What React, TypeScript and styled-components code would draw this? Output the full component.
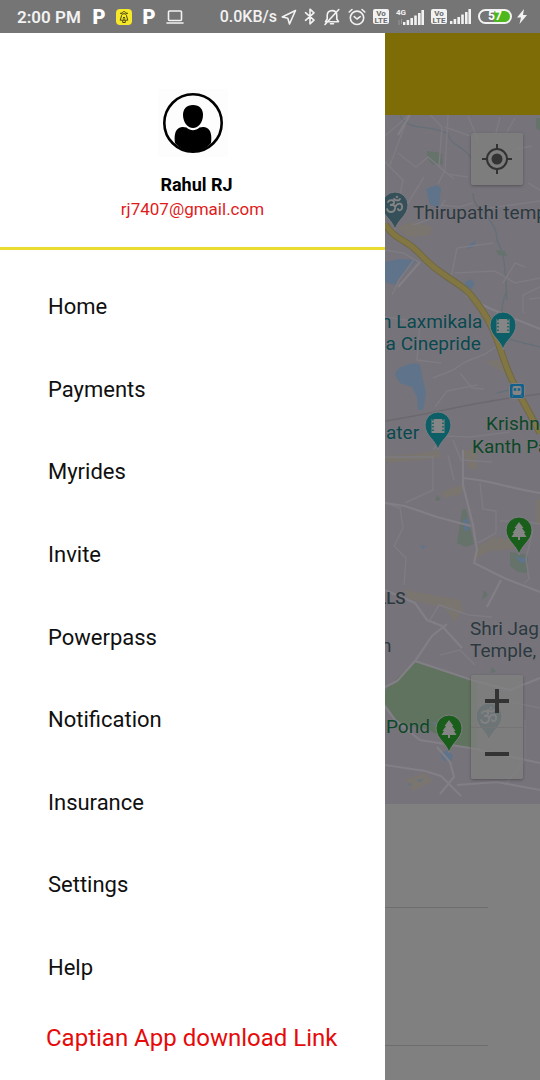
import React from "react";
import styled, { createGlobalStyle } from "styled-components";

const GlobalStyle = createGlobalStyle`
  *, *::before, *::after { box-sizing: border-box; }
  body { margin: 0; background: #808080; font-family: Roboto, "Liberation Sans", sans-serif; }
  button { font: inherit; cursor: pointer; }
`;

const Page = styled.div`
  display: flex;
  flex-direction: column;
  min-height: 100vh;
`;

/* Status bar */
const StatusBar = styled.header`
  display: flex;
  align-items: center;
  justify-content: space-between;
  height: 33px;
  padding: 0 13px 0 17px;
  background: #757575;
  color: #f2f2f2;
  font-size: 17px;
  font-weight: 500;
  white-space: nowrap;
`;

const StatusGroup = styled.div<{ $gap: number }>`
  display: flex;
  align-items: center;
  gap: ${(p) => p.$gap}px;
  svg { display: block; flex: none; }
`;

const Clock = styled.span`
  width: 65px;
  font-weight: 600;
`;

const Speed = styled.span`
  font-size: 16px;
`;

const PLogo = styled.span`
  width: 14px;
  text-align: center;
  font-size: 20px;
  font-weight: 900;
  color: #fff;
`;

const Volte = styled.span`
  display: flex;
  flex-direction: column;
  align-items: center;
  justify-content: center;
  width: 16px;
  height: 15px;
  border-radius: 2px;
  background: #f2f2f2;
  color: #6a6a6a;
  font-size: 8px;
  line-height: 7px;
  font-weight: 700;
`;

const Network = styled.span`
  display: flex;
  align-items: flex-end;
  height: 16px;
`;

const NetworkType = styled.span`
  align-self: flex-start;
  width: 10px;
  margin-right: -8px;
  font-size: 8px;
  line-height: 7px;
  font-weight: 700;
`;

const Battery = styled.span`
  display: flex;
  align-items: center;
  justify-content: center;
  width: 34px;
  height: 15px;
  border: 2px solid #f2f2f2;
  border-radius: 8px;
  background: linear-gradient(to right, #757575 46%, #4db81e 46%);
  color: #fff;
  font-size: 12px;
  line-height: 11px;
  font-weight: 700;
`;

/* Drawer */
const Body = styled.div`
  flex: 1;
  display: grid;
  grid-template-columns: minmax(0, 385px) minmax(0, 1fr);
`;

const Drawer = styled.aside`
  display: flex;
  flex-direction: column;
  background: #fff;
`;

const Profile = styled.section`
  display: flex;
  flex-direction: column;
  align-items: center;
  height: 217px;
  padding-top: 56px;
  border-bottom: 3px solid #e9dc2f;
`;

const AvatarBox = styled.div`
  padding: 4px 5px;
  background: #fdfdfd;
  svg { display: block; }
`;

const UserName = styled.h1`
  margin: 16px 0 0 8px;
  font-size: 18px;
  line-height: 24px;
  font-weight: 700;
  color: #000;
`;

const Email = styled.a`
  font-size: 17px;
  line-height: 24px;
  color: #e01b1b;
  text-decoration: none;
`;

const Menu = styled.nav`
  flex: 1;
  display: flex;
  flex-direction: column;
  padding: 45px 46px 25px;
`;

const MenuList = styled.div`
  flex: 1;
  display: flex;
  flex-direction: column;
  justify-content: space-between;
  padding-left: 2px;
`;

const MenuLink = styled.a`
  font-size: 22px;
  line-height: 24px;
  color: #101010;
  text-decoration: none;
`;

const DownloadLink = styled(MenuLink)`
  margin-top: 41px;
  font-size: 24px;
  line-height: 34px;
  color: #e60a0a;
  white-space: nowrap;
`;

/* Dimmed home screen */
const Home = styled.main`
  display: flex;
  flex-direction: column;
  background: #808080;
`;

const AppBar = styled.div`
  height: 82px;
  background: #7e6c07;
`;

const MapArea = styled.section`
  position: relative;
  flex: 1;
  overflow: hidden;
  background: #77737a;
`;

const MapArt = styled.svg`
  display: block;
  position: absolute;
  inset: 0;
  width: 100%;
  height: 100%;
`;

const Place = styled.span<{ $x: number; $y: number; $tone: string; $strong?: boolean }>`
  position: absolute;
  left: ${(p) => p.$x}px;
  top: ${(p) => p.$y}px;
  color: ${(p) => p.$tone};
  font-size: ${(p) => (p.$strong ? 17 : 19)}px;
  font-weight: ${(p) => (p.$strong ? 500 : 400)};
  line-height: 22px;
  white-space: pre;
  text-shadow: 0 0 2px #7f7c82;
`;

const MapControls = styled.div<{ $top: number }>`
  position: absolute;
  top: ${(p) => p.$top}px;
  right: 17px;
  display: flex;
  flex-direction: column;
  width: 52px;
  border-radius: 2px;
  background: rgba(128, 128, 128, 0.75);
  box-shadow: 0 1px 3px rgba(0, 0, 0, 0.3);
`;

const MapButton = styled.button`
  display: grid;
  place-items: center;
  width: 52px;
  height: 52px;
  padding: 0;
  border: 0;
  background: transparent;
  & + & { border-top: 1px solid #747474; }
`;

const Sheet = styled.section`
  height: 276px;
  padding-right: 52px;
`;

const SheetRow = styled.div<{ $height: number }>`
  height: ${(p) => p.$height}px;
  border-bottom: 1px solid #6d6d6d;
`;

const items = ["Home", "Payments", "Myrides", "Invite", "Powerpass", "Notification", "Insurance", "Settings", "Help"];

const line = { fill: "none", stroke: "#f2f2f2", strokeWidth: 1.6, strokeLinecap: "round", strokeLinejoin: "round" } as const;

function Signal() {
  return (
    <svg width="21" height="15" viewBox="0 0 21 15" fill="#f2f2f2" aria-hidden="true">
      <rect x="0" y="12" width="2.4" height="3" />
      <rect x="3.6" y="10" width="2.6" height="5" />
      <rect x="7.4" y="8" width="2.6" height="7" />
      <rect x="11.2" y="5.5" width="2.6" height="9.5" />
      <rect x="15" y="3" width="2.6" height="12" />
      <rect x="18.4" y="0" width="2.6" height="15" />
    </svg>
  );
}

function VolteBadge() {
  return (
    <Volte>
      <span>Vo</span>
      <span>LTE</span>
    </Volte>
  );
}

function Status() {
  return (
    <StatusBar>
      <StatusGroup $gap={10}>
        <Clock>2:00 PM</Clock>
        <PLogo>P</PLogo>
        <svg width="16" height="16" viewBox="0 0 16 16" aria-hidden="true">
          <rect width="16" height="16" rx="4" fill="#f5e929" />
          <path d="M4 4.300h2M10 4.300h2M6 4.500c0-2.500 4-2.500 4 0M5.200 8C5.200 6 6.300 4.700 8 4.700S10.800 6 10.800 8l1 3.200H4.200zM6.700 11.500v2h2.600v-2M8 11V8M6.800 9.200 8 8l1.200 1.200" fill="none" stroke="#4d4708" strokeWidth="1" />
        </svg>
        <PLogo>P</PLogo>
        <svg width="18" height="14" viewBox="0 0 18 14" aria-hidden="true">
          <rect x="2.500" y="1" width="13" height="9.500" rx="1" {...line} />
          <path d="M1 13h16" {...line} />
        </svg>
      </StatusGroup>
      <StatusGroup $gap={7}>
        <StatusGroup $gap={4}>
          <Speed>0.0KB/s</Speed>
          <svg width="16" height="16" viewBox="0 0 16 16" aria-hidden="true">
            <path d="M14.500 1.500 1.200 8l5.600 1.200L8.500 15z" {...line} />
          </svg>
        </StatusGroup>
        <svg width="12" height="17" viewBox="0 0 12 17" aria-hidden="true">
          <path d="M1.500 4.700 10 12.200 6 15.800V1.200l4 3.600L1.500 12.300" {...line} />
        </svg>
        <svg width="18" height="18" viewBox="0 0 18 18" aria-hidden="true">
          <path d="M2.500 13.700h13L13.800 11V7.500C13.800 4.500 12 2.600 9 2.600S4.200 4.500 4.200 7.500V11zM7.500 15.800h3M15.800 1.500 2 16.500" {...line} />
        </svg>
        <svg width="18" height="18" viewBox="0 0 18 18" aria-hidden="true">
          <circle cx="9" cy="9.800" r="6.700" {...line} />
          <path d="M6.200 8.700 9 11l3.200-2.300M1.200 4 4 1.500M16.800 4 14 1.500" {...line} />
        </svg>
        <VolteBadge />
        <Network>
          <NetworkType>4G</NetworkType>
          <svg width="5" height="6" viewBox="0 0 5 6" aria-hidden="true">
            <path d="M1 6V1M3.500 0v5" stroke="#999" strokeWidth="1" />
          </svg>
          <Signal />
        </Network>
        <StatusGroup $gap={3}>
          <VolteBadge />
          <Signal />
        </StatusGroup>
        <StatusGroup $gap={5}>
          <Battery>57</Battery>
          <svg width="10" height="15" viewBox="0 0 10 15" aria-hidden="true">
            <path d="M7 0 0 8.500h4L2.500 15 10 6H6z" fill="#f2f2f2" />
          </svg>
        </StatusGroup>
      </StatusGroup>
    </StatusBar>
  );
}

function Pin({ x, y, color, children }: { x: number; y: number; color: string; children: React.ReactNode }) {
  return (
    <g transform={`translate(${x} ${y})`}>
      <path d="M0 24C-2 14-13 10-13-1a13 13 0 0 1 26 0C13 10 2 14 0 24z" fill={color} stroke="#7f7c82" strokeWidth="1" />
      {children}
    </g>
  );
}

function Film() {
  return (
    <g>
      <path d="M-6.500-7h13V7h-13z" fill="#858585" />
      <path d="M-5-7V7M5-7V7" stroke="#0c5f66" strokeWidth="1.500" strokeDasharray="1.500 2" />
    </g>
  );
}

function Tree() {
  return <path d="M0-9-4.500-3H-3l-3.500 5H-5l-2.500 4H-1v3h2V6h6.500L5 2h1.500L3-3h1.500z" fill="#858585" />;
}

function Om({ tone }: { tone: string }) {
  return (
    <g fill="none" stroke={tone} strokeWidth="1.800" strokeLinecap="round">
      <path d="M-7-4C-5-7 0-6-1-3c-.5 2-3 2-4 2 4-.5 6 1 5 4-1 4-7 4-8 0M0 1c3-5 8-4 7 1-.5 3-4 3-4 1" />
      <path d="M-1-7c2 2 5 2 6 0" />
      <circle cx="2" cy="-9" r=".4" />
    </g>
  );
}

function MapDrawing() {
  return (
    <MapArt viewBox="385 115 155 689" preserveAspectRatio="xMinYMin slice" aria-hidden="true">
      <g fill="#7a756f">
        <path d="M397 227l15-5 20 5-2 8-22 2zM485 361l20-2 10 18-10-3zM385 456l30-2 25-4v8l-53 5zM440 492l22-7v9l-18 4zM476 548l18-11 25 4-3 8-28 2-15 10zM405 590l55 10 3 10-9 12-9-14-40-10zM462 450l15-1v20h-8zM536 500h4v25h-4zM405 780l20-7 8 8-20 10z" />
      </g>
      <g fill="#65736a">
        <path d="M427 151l15 2 1 11-10 1-6-7zM536 118h4v13l-4-3zM462 510l4-1 8 35-8 3-9-4zM510 552l18 3-1 18-9-1-8-6zM496 250l9 1 2 5-9-1zM437 495l4 5-6 1zM484 590l4 5-6 5zM492 667l4 5-6 1z" />
        <path d="M385 690c10-8 18-20 30-28l62 18v68c-24 3-34-14-54-20-22-2-31-9-38-24z" fill="#60735f" />
      </g>
      <g fill="#5f748a">
        <path d="M426 189l10-4 5 3-2 20-9-3zM385 262l15-3 17 1-12 13-10 12-10-3zM468 246l8-6-2 7-7 2zM465 282l5-3 5 4-3 6-7-1zM395 375c2-6 5-9 8-8 4-3 12-5 17-2l3 15 3 13-3 17h-5l-1-13-5-10-12-4zM463 520l5-2 1 12-5 1zM515 556l14 3-8 5zM420 545l6 1-3 3zM440 753l8-3 5 5-2 7-8-2zM433 722h3l-2 5zM408 783l4 1-3 2zM417 780l7-1-5 3z" />
      </g>
      <g fill="none" stroke="#667079" strokeWidth="1.500">
        <path d="M400 116c14 18 25 6 48 18 2 12 18 12 25 27M473 193c0 10 6 16 14 22 4 8 10 13 10 25 8 16 8 26 10 60M507 290c-6 14-6 25-3 40M500 337l40 10M497 393l16-4" />
      </g>
      <g fill="none" stroke="#7e7b82" strokeWidth="1.500">
        <path d="M385 136l16-14 8-7M385 162l18 18-4 20-12 7M405 125l-15 40M398 153l18 14 12-10 20 17 20 3M430 115l12 12-3 40 15 12M448 115l-3 55-7 14M407 205l17-28M441 205l18 2 14-4M445 127l25 9M468 116l10 24M500 117l-4 16M515 118l-8 14M532 146l-16 3M528 183l12 7M490 208l50-7M413 225l20-7 12-18M385 250l18 3 16 9M457 248l36-5M457 248l-6 30M455 273l40-2 20 12 25-5" />
        <path d="M385 317l35 5-3 38 24 3M392 295l7-15 15-20M433 378l20-8 12-8 20-8 12-8M435 407l12-16 30-6M460 373l12 15 12 1M503 283l12-20 10 4M529 299l11-1M523 313v-18l17-8M433 450l10-14 27 1 40-5M453 440l8 20 31 2" />
        <path d="M385 457h48v33l-28 13M448 455l6 25M480 483l3 26 13 2v22l-18 10M385 503l15 5 3 20-9 18 12 12-2 27M500 521h20l20 3M533 529l-7 30 3 20-5 4M430 620l9-15 30 10 23 2M440 655l20-5 15 15M500 700l40 8M525 720v40l-20 25" />
      </g>
      <g fill="none" stroke="#827f86" strokeWidth="2.200">
        <path d="M466 295c22 15 45 22 74 34M463 450v35l10 40 4 25-3 13 30 15 36 14M463 478c28 2 48 11 77 15M385 503l20 3 32 11 34 9M501 580l-14 27M385 590l30 13 12 17 15 6 20 22M447 624l-15 12-17 25-18 20-12 6M415 661l60 20 35 9 30-12M385 706l10 14 25 20 50 8 70 15M437 747l13 15 4 15-14 17M385 765l40 6 16 5 20 20M457 785l40-3 43 8M410 115l-12 20M420 262l-22 25" />
      </g>
      <path d="M385 421c55-8 80-18 155-27" fill="none" stroke="#6b696f" strokeWidth="1.500" />
      <path d="M385 224q6 10 17 16t20 16 24 20 20 14 16 20 19 41 18 43 21 39" fill="none" stroke="#6f6845" strokeWidth="7" />
      <path d="M385 224q6 10 17 16t20 16 24 20 20 14 16 20 19 41 18 43 21 39" fill="none" stroke="#827742" strokeWidth="5" />

      <Pin x={395} y={206} color="#36505a"><Om tone="#858585" /></Pin>
      <Pin x={503} y={326} color="#0c5f66"><Film /></Pin>
      <Pin x={438} y={426} color="#0c5f66"><Film /></Pin>
      <Pin x={519} y={531} color="#195f1b"><Tree /></Pin>
      <Pin x={449} y={729} color="#195f1b"><Tree /></Pin>
      <Pin x={489} y={717} color="#36505a"><Om tone="#858585" /></Pin>

      <rect x="509.500" y="383.500" width="15" height="15" rx="2" fill="#12618a" stroke="#7f7c82" />
      <rect x="512.500" y="386" width="9" height="9" rx="2" fill="#858585" />
      <path d="M513.500 388h3v3h-3zM517.500 388h3v3h-3zM513 395l-1 2M521 395l1 2" fill="#12618a" stroke="#858585" strokeWidth=".5" />
    </MapArt>
  );
}

const slate = "#2b393f";
const teal = "#08484e";
const green = "#0d4728";

export default function App() {
  return (
    <Page>
      <GlobalStyle />
      <Status />
      <Body>
        <Drawer>
          <Profile>
            <AvatarBox>
              <svg width="60" height="60" viewBox="0 0 60 60" role="img" aria-label="Profile picture">
                <path d="M30 12c6.500 0 10 4 10 10 0 7-4.500 13-10 13s-10-6-10-13c0-6 3.500-10 10-10z" />
                <path d="M12 50c-1-7 0-13 4-15 3-1.500 5-1 7.500-.5 4 3.700 9 3.700 13 0 2.500-.5 4.500-1 7.500.5 4 2 5 8 4 15C43 55.500 37 58.500 30 58.500S17 55.500 12 50z" />
                <circle cx="30" cy="30" r="28.700" fill="none" stroke="#000" strokeWidth="2.600" />
              </svg>
            </AvatarBox>
            <UserName>Rahul RJ</UserName>
            <Email href="mailto:rj7407@gmail.com">rj7407@gmail.com</Email>
          </Profile>
          <Menu>
            <MenuList>
              {items.map((item) => (
                <MenuLink key={item} href={`#${item.toLowerCase()}`}>{item}</MenuLink>
              ))}
            </MenuList>
            <DownloadLink href="#captain-app">Captian App download Link</DownloadLink>
          </Menu>
        </Drawer>
        <Home>
          <AppBar />
          <MapArea>
            <MapDrawing />
            <Place $x={28} $y={87} $tone={slate}>Thirupathi temp</Place>
            <Place $x={-4} $y={196} $tone={teal}>{"n Laxmikala\nla Cinepride"}</Place>
            <Place $x={1} $y={307} $tone={teal}>ater</Place>
            <Place $x={101} $y={298} $tone={green}>Krishn</Place>
            <Place $x={87} $y={321} $tone={green}>Kanth Pa</Place>
            <Place $x={-8} $y={472} $tone={slate} $strong>LLS</Place>
            <Place $x={85} $y={503} $tone={slate}>{"Shri Jag\nTemple,"}</Place>
            <Place $x={-4} $y={520} $tone={slate}>n</Place>
            <Place $x={1} $y={601} $tone={green}>Pond</Place>
            <MapControls $top={18}>
              <MapButton type="button" aria-label="My location">
                <svg width="30" height="30" viewBox="0 0 30 30" aria-hidden="true">
                  <circle cx="15" cy="15" r="5.500" fill="#333" />
                  <circle cx="15" cy="15" r="10" fill="none" stroke="#333" strokeWidth="2" />
                  <path d="M15 0v5M15 25v5M0 15h5M25 15h5" stroke="#333" strokeWidth="2" />
                </svg>
              </MapButton>
            </MapControls>
            <MapControls $top={560}>
              <MapButton type="button" aria-label="Zoom in">
                <svg width="24" height="24" viewBox="0 0 24 24" aria-hidden="true">
                  <path d="M12 0v24M0 12h24" stroke="#333" strokeWidth="4" />
                </svg>
              </MapButton>
              <MapButton type="button" aria-label="Zoom out">
                <svg width="24" height="24" viewBox="0 0 24 24" aria-hidden="true">
                  <path d="M0 12h24" stroke="#333" strokeWidth="4" />
                </svg>
              </MapButton>
            </MapControls>
          </MapArea>
          <Sheet>
            <SheetRow $height={104} />
            <SheetRow $height={138} />
          </Sheet>
        </Home>
      </Body>
    </Page>
  );
}
